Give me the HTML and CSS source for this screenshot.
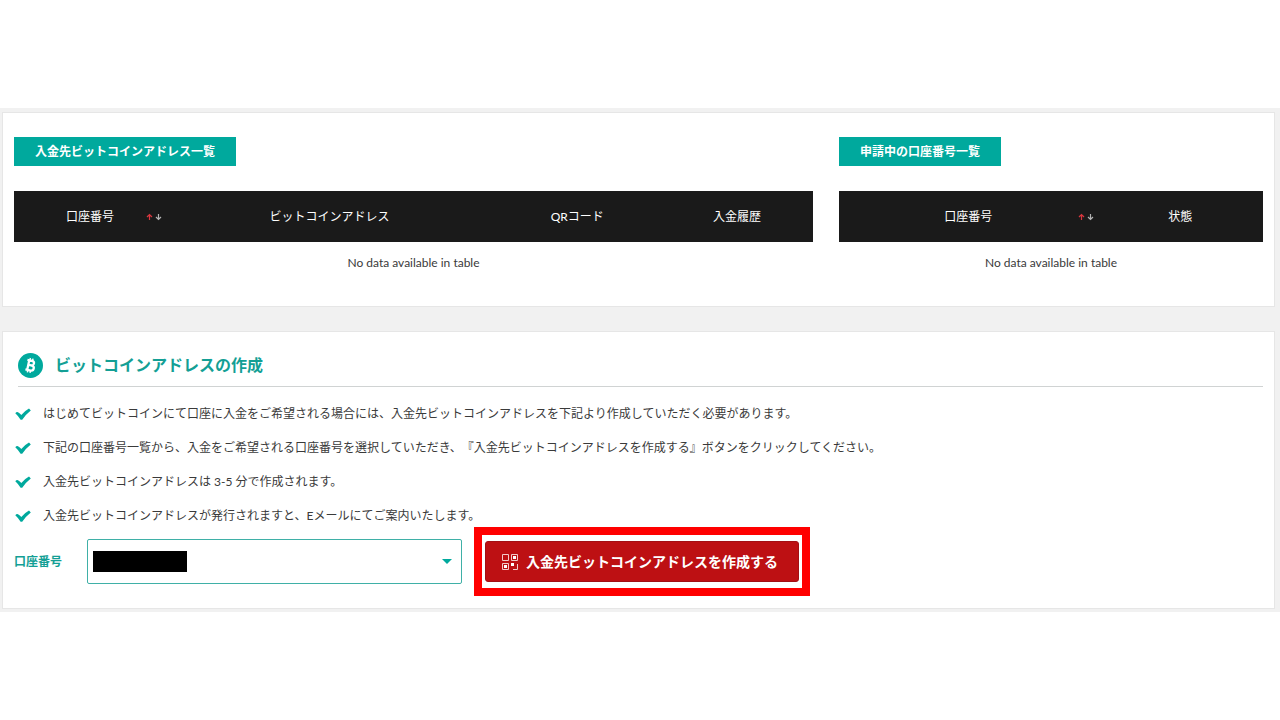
FILE: index.html
```html
<!DOCTYPE html>
<html lang="ja">
<head>
<meta charset="utf-8">
<title>ビットコインアドレスの作成</title>
<link rel="stylesheet" href="styles.css">
</head>
<body>
<svg class="defs" aria-hidden="true">
  <symbol id="check" viewBox="0 0 16 12"><path d="M0.3 5.2Q1.6 3.6 3 4.2 5 5.3 6.3 6.9 9.6 2.8 14 0.4L15.8 2.4Q10.8 6.2 7.2 11.8H5.6Q3.4 8 0.3 5.2Z"/></symbol>
  <symbol id="sort" viewBox="0 0 16 8"><path d="M3.5 7V1.5M1 4 3.5 1.5 6 4" stroke="#d9363e" stroke-width="1.2"/><path d="M12.5 1V6.5M10 4 12.5 6.5 15 4" stroke="#b4b4b4" stroke-width="1.2"/></symbol>
</svg>
<main class="page">
  <section class="card lists">
    <div class="list list-wide">
      <h2 class="tag">入金先ビットコインアドレス一覧</h2>
      <table class="table">
        <colgroup><col class="c19"><col class="c41"><col class="c21"><col class="c19"></colgroup>
        <thead><tr>
          <th>口座番号<button class="sort" type="button" aria-label="並べ替え"><svg><use href="#sort"/></svg></button></th>
          <th>ビットコインアドレス</th><th>QRコード</th><th>入金履歴</th>
        </tr></thead>
        <tbody><tr><td colspan="4">No data available in table</td></tr></tbody>
      </table>
    </div>
    <div class="list list-narrow">
      <h2 class="tag">申請中の口座番号一覧</h2>
      <table class="table">
        <colgroup><col class="c61"><col class="c39"></colgroup>
        <thead><tr>
          <th>口座番号<button class="sort" type="button" aria-label="並べ替え"><svg><use href="#sort"/></svg></button></th>
          <th>状態</th>
        </tr></thead>
        <tbody><tr><td colspan="2">No data available in table</td></tr></tbody>
      </table>
    </div>
  </section>

  <section class="card create">
    <h1 class="title">
      <svg class="coin" viewBox="0 0 24 24" aria-hidden="true"><circle cx="12" cy="12" r="12" fill="#00a99d"/><g transform="rotate(12 12 12)" fill="none" stroke="#fff"><path stroke-width="2.2" d="M9.8 7.3V16.7M8 7.3H12.6A2.2 2.2 0 0 1 12.6 11.8H10M12.6 11.8H13.2A2.4 2.4 0 0 1 13.2 16.7H8"/><path stroke-width="1.4" d="M10.4 5V7M13 5V7M10.4 17V19M13 17V19"/></g></svg>
      ビットコインアドレスの作成
    </h1>
    <ul class="notes">
      <li><svg class="check"><use href="#check"/></svg>はじめてビットコインにて口座に入金をご希望される場合には、入金先ビットコインアドレスを下記より作成していただく必要があります。</li>
      <li><svg class="check"><use href="#check"/></svg>下記の口座番号一覧から、入金をご希望される口座番号を選択していただき、『入金先ビットコインアドレスを作成する』ボタンをクリックしてください。</li>
      <li><svg class="check"><use href="#check"/></svg>入金先ビットコインアドレスは 3-5 分で作成されます。</li>
      <li><svg class="check"><use href="#check"/></svg>入金先ビットコインアドレスが発行されますと、Eメールにてご案内いたします。</li>
    </ul>
    <form class="form">
      <label class="label" for="account">口座番号</label>
      <div class="select-box">
        <select id="account" class="select"><option></option></select>
        <span class="redaction"></span>
        <svg class="caret" viewBox="0 0 10 5" aria-hidden="true"><path d="M0 0H10L5 5Z" fill="#00a99d"/></svg>
      </div>
      <div class="action">
        <button class="submit" type="button">
          <svg class="qr" viewBox="0 0 18 18" fill="none" stroke="#f3c9c9" aria-hidden="true"><path d="M1.5 1.5H7.5V7.5H1.5ZM10.5 1.5H16.5V7.5H10.5ZM1.5 10.5H7.5V16.5H1.5ZM16.5 11V16.5H12"/><path fill="#fff" stroke="none" d="M12 3H15V6H12ZM3 12H6V15H3ZM10 10H13V13H10Z"/></svg>
          入金先ビットコインアドレスを作成する
        </button>
      </div>
    </form>
  </section>
</main>
</body>
</html>
```
FILE: styles.css
```css
* { box-sizing: border-box; }

body {
  margin: 0;
  min-height: 100vh;
  display: flex;
  align-items: center;
  background: #fff;
  color: #3a3a3a;
  font: 12px/18px Lato, "Noto Sans CJK JP", sans-serif;
  text-spacing-trim: space-all;
}

.defs { display: none; }

.page {
  flex: 1;
  display: flex;
  flex-direction: column;
  gap: 24px;
  padding: 4px 5px 3px 2px;
  background: #f1f1f1;
}

.card {
  background: #fff;
  border: 1px solid #e6e6e6;
}

.lists {
  display: flex;
  gap: 26px;
  padding: 24px 11px 22px;
}

.list-wide { flex: 799 1 0; }
.list-narrow { flex: 424 1 0; }

.tag {
  display: inline-block;
  margin: 0 0 25px;
  padding: 6px 21px 5px;
  background: #00a99d;
  color: #fff;
  font-size: 12px;
  line-height: 18px;
  font-weight: 700;
  vertical-align: top;
}

.table {
  width: 100%;
  table-layout: fixed;
  border-collapse: collapse;
  text-align: center;
}

.c19 { width: 19%; }
.c21 { width: 21%; }
.c39 { width: 39%; }
.c41 { width: 41%; }
.c61 { width: 61%; }

.table th {
  position: relative;
  height: 51px;
  padding: 0;
  background: #1a1a1a;
  color: #fff;
  font-weight: 400;
}

.table td { padding: 12px 0; }

.sort {
  position: absolute;
  right: 4px;
  top: 22px;
  width: 16px;
  height: 8px;
  padding: 0;
  border: 0;
  background: none;
}

.sort svg {
  display: block;
  width: 16px;
  height: 8px;
  fill: none;
}

.create { padding: 20px 11px 24px; }

.title {
  display: flex;
  align-items: center;
  gap: 12px;
  margin: 0 0 0 4px;
  padding-bottom: 8px;
  border-bottom: 1px solid #d0d3d3;
  color: #149f95;
  font-size: 16px;
  line-height: 26px;
  font-weight: 700;
}

.coin { width: 25px; height: 25px; }

.notes {
  display: flex;
  flex-direction: column;
  gap: 16px;
  margin: 18px 0 14px;
  padding: 0;
  list-style: none;
}

.notes li {
  display: flex;
  align-items: center;
  gap: 12px;
  padding-left: 1px;
  white-space: pre-wrap;
}

.check {
  flex: none;
  width: 16px;
  height: 12px;
  fill: #00a99d;
}

.form {
  display: flex;
  align-items: center;
}

.label {
  width: 73px;
  color: #149f95;
  font-weight: 700;
}

.select-box {
  position: relative;
  flex: 0 1 375px;
  height: 45px;
}

.select {
  width: 100%;
  height: 100%;
  appearance: none;
  border: 1px solid #3fb0a7;
  border-radius: 2px;
  background: #fff;
  color: #149f95;
  font: inherit;
}

.redaction {
  position: absolute;
  left: 6px;
  top: 12px;
  width: 94px;
  height: 21px;
  background: #000;
}

.caret {
  position: absolute;
  right: 10px;
  top: 20px;
  width: 10px;
  height: 5px;
}

.action {
  position: relative;
  margin-left: 23px;
}

.action::after {
  content: "";
  position: absolute;
  inset: -14px -11px;
  border: 8px solid #f00;
  pointer-events: none;
}

.submit {
  display: flex;
  align-items: center;
  gap: 7px;
  width: 314px;
  height: 41px;
  padding: 0 15px;
  border: 1px solid #a30f14;
  border-radius: 3px;
  background: #bd1013;
  color: #fff;
  font: 700 14px/20px Lato, "Noto Sans CJK JP", sans-serif;
}

.qr { width: 18px; height: 18px; }
```
